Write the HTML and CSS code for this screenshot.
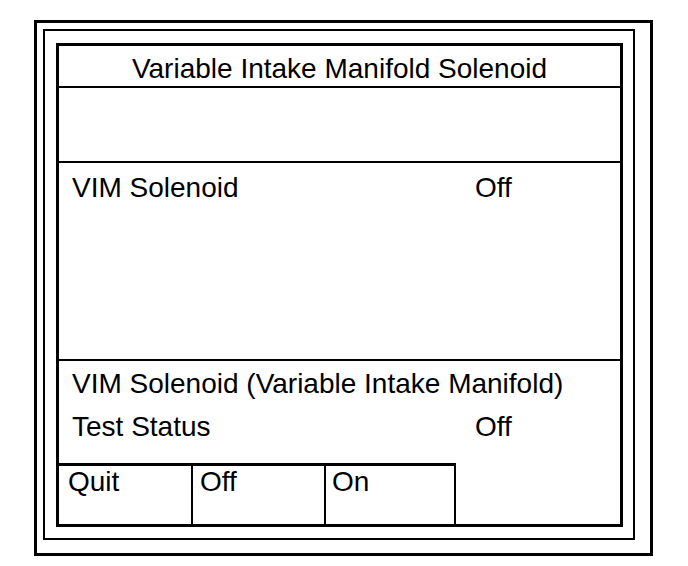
FILE: index.html
```html
<!DOCTYPE html>
<html>
<head>
<meta charset="utf-8">
<link rel="stylesheet" href="styles.css">
<title>Variable Intake Manifold Solenoid</title>
</head>
<body>
<div class="outer">
  <div class="frame">
    <div class="panel">
      <div class="title">Variable Intake Manifold Solenoid</div>
      <div class="blank"></div>
      <div class="data">
        <div class="row"><span class="label">VIM Solenoid</span><span class="value">Off</span></div>
      </div>
      <div class="info">
        <div class="line">VIM Solenoid (Variable Intake Manifold)</div>
        <div class="row"><span class="label">Test Status</span><span class="value">Off</span></div>
      </div>
      <div class="buttons">
        <div class="btn btn-quit">Quit</div>
        <div class="btn btn-off">Off</div>
        <div class="btn btn-on">On</div>
      </div>
    </div>
  </div>
</div>
</body>
</html>
```

FILE: styles.css
```css
html, body {
  margin: 0;
  padding: 0;
  background: #fff;
}
body {
  font-family: "Liberation Sans", Arial, sans-serif;
  font-size: 28px;
  color: #000;
}
.outer {
  box-sizing: border-box;
  margin: 20px 0 0 34px;
  width: 619px;
  height: 536px;
  border: 3px solid #000;
  padding: 6px 15px 13px 6px;
}
.frame {
  box-sizing: border-box;
  width: 592px;
  height: 511px;
  border: 2px solid #000;
  padding: 12px 10px 11px 11px;
}
.panel {
  box-sizing: border-box;
  height: 484px;
  border: 3px solid #000;
  display: flex;
  flex-direction: column;
}
.title {
  height: 42px;
  box-sizing: border-box;
  padding-top: 4px;
  line-height: 38px;
  text-align: center;
  border-bottom: 2px solid #000;
  flex: none;
}
.blank {
  height: 73px;
  border-bottom: 2px solid #000;
  flex: none;
}
.data {
  height: 198px;
  box-sizing: border-box;
  padding: 9px 0 0 13px;
  line-height: 32px;
  border-bottom: 2px solid #000;
  flex: none;
}
.row {
  display: grid;
  grid-template-columns: 403px auto;
}
.info {
  flex: 1;
  padding: 1px 0 0 13px;
  line-height: 43px;
}
.buttons {
  display: grid;
  grid-template-columns: 134px 133px 130px;
  height: 61px;
  flex: none;
}
.btn {
  box-sizing: border-box;
  border-top: 3px solid #000;
  border-right: 2px solid #000;
  line-height: 32px;
  padding-left: 7px;
}
.btn-quit { padding-left: 9px; }
.btn-on { padding-left: 6px; }
```
